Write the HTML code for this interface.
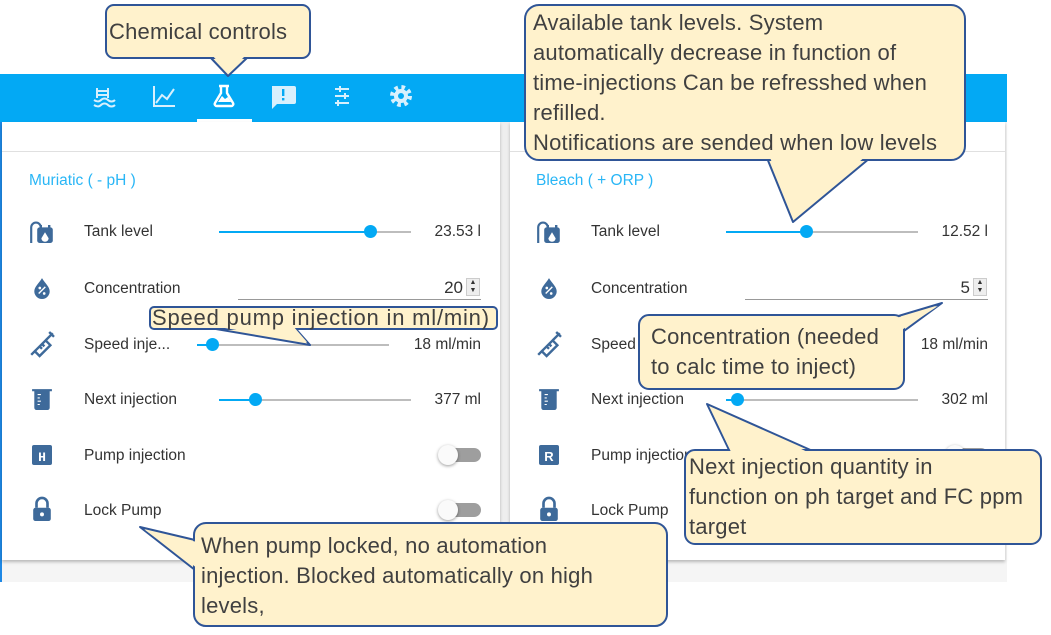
<!DOCTYPE html>
<html><head><meta charset="utf-8">
<style>
*{margin:0;padding:0;box-sizing:border-box}
body{width:1051px;height:635px;position:relative;background:#fff;overflow:hidden;font-family:"Liberation Sans",sans-serif}
.abs{position:absolute}
.bar{left:0;top:74px;width:1007px;height:48px;background:#03a9f4}
.app{left:0;top:122px;width:1007px;height:460px;background:#f5f5f5;border-left:2px solid #1e88e5}
.card{top:122px;height:438px;background:#fff;box-shadow:0 2px 3px rgba(0,0,0,.25)}
.lbl{font-size:15.5px;color:#333;white-space:nowrap}
.val{font-size:15.5px;color:#333;text-align:right;white-space:nowrap}
.ttl{font-size:15.5px;color:#29b6f6}
.trk{height:2px;background:#bdbdbd}
.fill{height:2px;background:#03a9f4}
.knob{width:13px;height:13px;border-radius:50%;background:#03a9f4}
.tg{width:34px;height:14px;border-radius:7px;background:#9e9e9e}
.tk{width:20px;height:20px;border-radius:50%;background:#fafafa;box-shadow:0 1px 3px rgba(0,0,0,.4)}
.ct{font-size:22px;color:#404040;line-height:30px;white-space:nowrap;letter-spacing:0.2px}
</style></head><body>
<div class="abs app"></div>
<div class="abs bar"></div>
<div class="abs" style="left:197px;top:119px;width:55px;height:3px;background:#fff"></div>
<svg class="abs" style="left:0;top:74px" width="1007" height="48">
<g fill="none" stroke="#d8f0fd" stroke-width="2">
<path d="M97 14v10M108 14v10M97 17h11M97 21h11M94 26c3 2 5 2 7 0s5-2 7 0 5 2 7 0M94 31c3 2 5 2 7 0s5-2 7 0 5 2 7 0"/>
<path d="M154 12v20h21M156 29l6-8 5 4 7-10"/>
<path d="M335 15h14M335 22h14M335 29h14M340 12v6M345 19v6M338 26v6"/>
</g>
<path d="M219 12h10M221 12v7l-6 10a2 2 0 0 0 2 3h14a2 2 0 0 0 2-3l-6-10v-7" fill="none" stroke="#fff" stroke-width="2.4"/>
<path d="M218 28l4-6 3 3 3-2 3 5z" fill="#fff"/>
<path d="M272 12h22a2 2 0 0 1 2 2v14a2 2 0 0 1-2 2h-17l-5 5z" fill="#d8f0fd"/>
<rect x="282" y="15" width="2.4" height="7" fill="#03a9f4"/><rect x="282" y="24" width="2.4" height="2.4" fill="#03a9f4"/>
<g transform="translate(401 22)"><circle r="8.5" fill="none" stroke="#d8f0fd" stroke-width="5" stroke-dasharray="3.4 3.3"/><circle r="7" fill="#d8f0fd"/><circle r="3" fill="#03a9f4"/></g>
</svg>

<div class="abs" style="left:500px;top:122px;width:10px;height:438px;background:#eee"></div>
<div class="abs card" style="left:2px;width:498px"></div>
<div class="abs card" style="left:510px;width:495px"></div>
<div class="abs" style="left:2px;top:151px;width:498px;height:1px;background:#e0e0e0"></div>
<div class="abs" style="left:510px;top:151px;width:495px;height:1px;background:#e0e0e0"></div>

<div class="abs ttl" style="left:29px;top:172px">Muriatic ( - pH )</div>
<div class="abs ttl" style="left:536px;top:172px">Bleach ( + ORP )</div>

<svg class="abs" style="left:0;top:0" width="1051" height="635">
<defs>
<g id="tank"><path d="M-9 10v-13a4 4 0 0 1 8 0v2" fill="none" stroke="#3e6a9a" stroke-width="1.8"/><rect x="-4" y="-3" width="13" height="13" rx="2" fill="#3e6a9a"/><rect x="-2" y="-5" width="2" height="3" fill="#3e6a9a"/><rect x="5" y="-5" width="2" height="3" fill="#3e6a9a"/><path d="M2.5 1l-3 5a3 3 0 0 0 6 0z" fill="#fff"/></g>
<g id="drop"><path d="M0 -9c-3 5-7 8-7 12a7 7 0 0 0 14 0c0-4-4-7-7-12z" fill="#3e6a9a"/><path d="M-3 5l6-6" stroke="#fff" stroke-width="1.3"/><circle cx="-2" cy="0" r="1.2" fill="#fff"/><circle cx="2" cy="5" r="1.2" fill="#fff"/></g>
<g id="syr" fill="none" stroke="#3e6a9a" stroke-width="2"><path d="M-9 9l4-4M-6 6l9-9 4 4-9 9zM3-3l6-6M6-10l4 4M-2 2l2 2M0 0l2 2"/></g>
<g id="beak"><path d="M-9-9h18v2h-2v15a2 2 0 0 1-2 2h-10a2 2 0 0 1-2-2v-15h-2z" fill="#3e6a9a"/><path d="M-4-4h3M-4-1h2M-4 2h3M-4 5h2" stroke="#fff" stroke-width="1"/></g>
<g id="lock"><path d="M-5-2v-4a5 5 0 0 1 10 0v4" fill="none" stroke="#3e6a9a" stroke-width="2.4"/><rect x="-8" y="-2" width="16" height="12" rx="2" fill="#3e6a9a"/><circle cx="0" cy="4" r="1.8" fill="#fff"/></g>
</defs>
<g transform="translate(42 231) scale(1.2)"><use href="#tank"/></g>
<g transform="translate(42 288) scale(1.1)"><use href="#drop"/></g>
<g transform="translate(42 344) scale(1.2)"><use href="#syr"/></g>
<g transform="translate(42 399) scale(1.1)"><use href="#beak"/></g>
<g transform="translate(42 510) scale(1.1)"><use href="#lock"/></g>
<rect x="32" y="445" width="20" height="20" rx="2" fill="#3e6a9a"/><text x="42" y="461" font-size="13" font-weight="bold" fill="#fff" text-anchor="middle" font-family="Liberation Mono">H</text>
<g transform="translate(549 231) scale(1.2)"><use href="#tank"/></g>
<g transform="translate(549 288) scale(1.1)"><use href="#drop"/></g>
<g transform="translate(549 344) scale(1.2)"><use href="#syr"/></g>
<g transform="translate(549 399) scale(1.1)"><use href="#beak"/></g>
<g transform="translate(549 510) scale(1.1)"><use href="#lock"/></g>
<rect x="539" y="445" width="20" height="20" rx="2" fill="#3e6a9a"/><text x="549" y="461" font-size="13" font-weight="bold" fill="#fff" text-anchor="middle" font-family="Liberation Sans">R</text>
</svg>

<div class="abs lbl" style="left:84px;top:223px">Tank level</div>
<div class="abs lbl" style="left:84px;top:280px">Concentration</div>
<div class="abs lbl" style="left:84px;top:336px">Speed inje...</div>
<div class="abs lbl" style="left:84px;top:391px">Next injection</div>
<div class="abs lbl" style="left:84px;top:447px">Pump injection</div>
<div class="abs lbl" style="left:84px;top:502px">Lock Pump</div>
<div class="abs trk" style="left:219px;top:231px;width:192px"></div><div class="abs fill" style="left:219px;top:231px;width:151px"></div><div class="abs knob" style="left:364px;top:225px"></div>
<div class="abs val" style="left:400px;top:223px;width:81px">23.53 l</div>
<div class="abs" style="left:238px;top:299px;width:243px;height:1px;background:#999"></div>
<div class="abs val" style="left:400px;top:278px;width:63px;font-size:17px">20</div>
<div class="abs" style="left:466px;top:278px;width:14px;height:18px;background:#eee;border:1px solid #ccc;font-size:7px;line-height:8px;text-align:center;color:#333">▲<br>▼</div>
<div class="abs trk" style="left:197px;top:344px;width:192px"></div><div class="abs fill" style="left:197px;top:344px;width:15px"></div><div class="abs knob" style="left:206px;top:338px"></div>
<div class="abs val" style="left:380px;top:336px;width:101px">18 ml/min</div>
<div class="abs trk" style="left:219px;top:399px;width:192px"></div><div class="abs fill" style="left:219px;top:399px;width:36px"></div><div class="abs knob" style="left:249px;top:393px"></div>
<div class="abs val" style="left:400px;top:391px;width:81px">377 ml</div>
<div class="abs tg" style="left:447px;top:448px"></div><div class="abs tk" style="left:438px;top:445px"></div>
<div class="abs tg" style="left:447px;top:503px"></div><div class="abs tk" style="left:438px;top:500px"></div>

<div class="abs lbl" style="left:591px;top:223px">Tank level</div>
<div class="abs lbl" style="left:591px;top:280px">Concentration</div>
<div class="abs lbl" style="left:591px;top:336px">Speed inje...</div>
<div class="abs lbl" style="left:591px;top:391px">Next injection</div>
<div class="abs lbl" style="left:591px;top:447px">Pump injection</div>
<div class="abs lbl" style="left:591px;top:502px">Lock Pump</div>
<div class="abs trk" style="left:726px;top:231px;width:192px"></div><div class="abs fill" style="left:726px;top:231px;width:80px"></div><div class="abs knob" style="left:800px;top:225px"></div>
<div class="abs val" style="left:900px;top:223px;width:88px">12.52 l</div>
<div class="abs" style="left:745px;top:299px;width:243px;height:1px;background:#999"></div>
<div class="abs val" style="left:900px;top:278px;width:70px;font-size:17px">5</div>
<div class="abs" style="left:973px;top:278px;width:14px;height:18px;background:#eee;border:1px solid #ccc;font-size:7px;line-height:8px;text-align:center;color:#333">▲<br>▼</div>
<div class="abs trk" style="left:704px;top:344px;width:192px"></div>
<div class="abs val" style="left:880px;top:336px;width:108px">18 ml/min</div>
<div class="abs trk" style="left:726px;top:399px;width:192px"></div><div class="abs fill" style="left:726px;top:399px;width:11px"></div><div class="abs knob" style="left:731px;top:393px"></div>
<div class="abs val" style="left:900px;top:391px;width:88px">302 ml</div>
<div class="abs tg" style="left:954px;top:448px"></div><div class="abs tk" style="left:945px;top:445px"></div>

<svg class="abs" style="left:0;top:0" width="1051" height="635">
<g fill="#fff2cc" stroke="#2f5597" stroke-width="2" stroke-linejoin="round">
<polygon points="210,57 248,57 228,76"/><rect x="106" y="5" width="204" height="53" rx="8"/>
<polygon points="767,158 870,158 793,222"/><rect x="525" y="5" width="440" height="155" rx="14"/>
<polygon points="210,328 295,328 310,345"/><rect x="150" y="307" width="347" height="22" rx="4"/>
<polygon points="885,320 885,345 942,303"/><rect x="639" y="315" width="265" height="74" rx="10"/>
<polygon points="730,452 815,452 707,404"/><rect x="685" y="450" width="356" height="94" rx="10"/>
<polygon points="195,540 195,570 140,527"/><rect x="194" y="523" width="473" height="103" rx="12"/>
</g>
<g fill="#fff2cc">
<polygon points="212,55 246,55 228,73"/>
<polygon points="769,155 867,155 794,219"/>
<polygon points="213,326 293,326 307,342"/>
<polygon points="882,322 882,343 938,306"/>
<polygon points="732,454 812,454 710,407"/>
<polygon points="197,542 197,568 145,530"/>
</g>
</svg>
<div class="abs ct" style="left:109px;top:17px">Chemical controls</div>
<div class="abs ct" style="left:533px;top:8px">Available tank levels. System<br>automatically decrease in function of<br>time-injections Can be refresshed when<br>refilled.<br>Notifications are sended when low levels</div>
<div class="abs ct" style="left:152px;top:303px;letter-spacing:0.8px">Speed pump injection in ml/min)</div>
<div class="abs ct" style="left:651px;top:322px">Concentration (needed<br>to calc time to inject)</div>
<div class="abs ct" style="left:689px;top:452px">Next injection quantity in<br>function on ph target and FC ppm<br>target</div>
<div class="abs ct" style="left:201px;top:531px">When pump locked, no automation<br>injection. Blocked automatically on high<br>levels,</div>
</body></html>
